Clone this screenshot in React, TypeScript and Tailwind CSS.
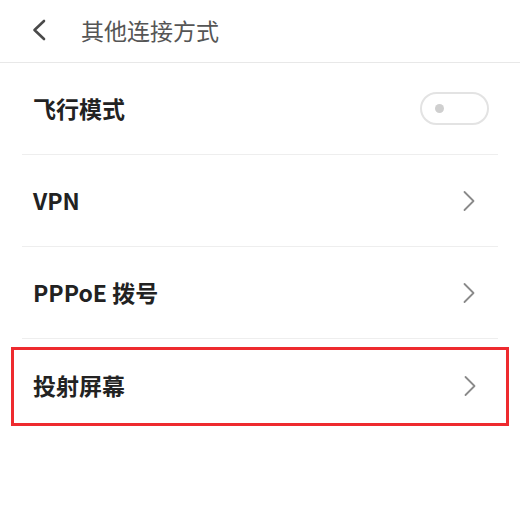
const FONT = { fontFamily: '"Noto Sans CJK SC", "Noto Sans", sans-serif' };

function Chevron() {
  return (
    <svg width="14" height="22" viewBox="0 0 14 22" className="shrink-0">
      <path d="M2.5 2 L11.5 11 L2.5 20" fill="none" stroke="#8a8a8a" strokeWidth="1.8" strokeLinecap="round" strokeLinejoin="round" />
    </svg>
  );
}

function Toggle() {
  return (
    <div className="flex h-[33px] w-[69px] items-center rounded-full border-[2px] border-[#e3e3e3] bg-white pl-[13px]">
      <div className="h-[9px] w-[9px] rounded-full bg-[#cfcfcf]" />
    </div>
  );
}

const rows = [
  { label: '飞行模式', toggle: true },
  { label: 'VPN' },
  { label: 'PPPoE 拨号' },
];

export default function App() {
  return (
    <div className="h-[513px] w-[520px] overflow-hidden bg-white" style={FONT}>
      <div className="flex h-[63px] items-center border-b border-[#e8e8e8] pb-[2px]">
        <svg width="18" height="24" viewBox="0 0 18 24" className="ml-[30px] shrink-0">
          <path d="M14 3 L4.5 12 L14 21" fill="none" stroke="#4a4a4a" strokeWidth="2.6" strokeLinecap="round" strokeLinejoin="round" />
        </svg>
        <span className="ml-[33px] text-[23px] leading-none text-[#555555]">其他连接方式</span>
      </div>

      {rows.map((row) => (
        <div key={row.label} className="mx-[22px] flex h-[92px] items-center justify-between border-b border-[#eeeeee]">
          <span className="pl-[11px] text-[23px] font-bold leading-none text-[#222222]">{row.label}</span>
          {row.toggle ? (
            <div className="pr-[9px]">
              <Toggle />
            </div>
          ) : (
            <div className="pr-[22px]">
              <Chevron />
            </div>
          )}
        </div>
      ))}

      <div className="mx-[11px] mt-[8px] flex h-[79px] items-center justify-between border-[3px] border-[#ee2a2f] pb-[2px] pl-[19px] pr-[29px]">
        <span className="text-[23px] font-bold leading-none text-[#222222]">投射屏幕</span>
        <Chevron />
      </div>
    </div>
  );
}
